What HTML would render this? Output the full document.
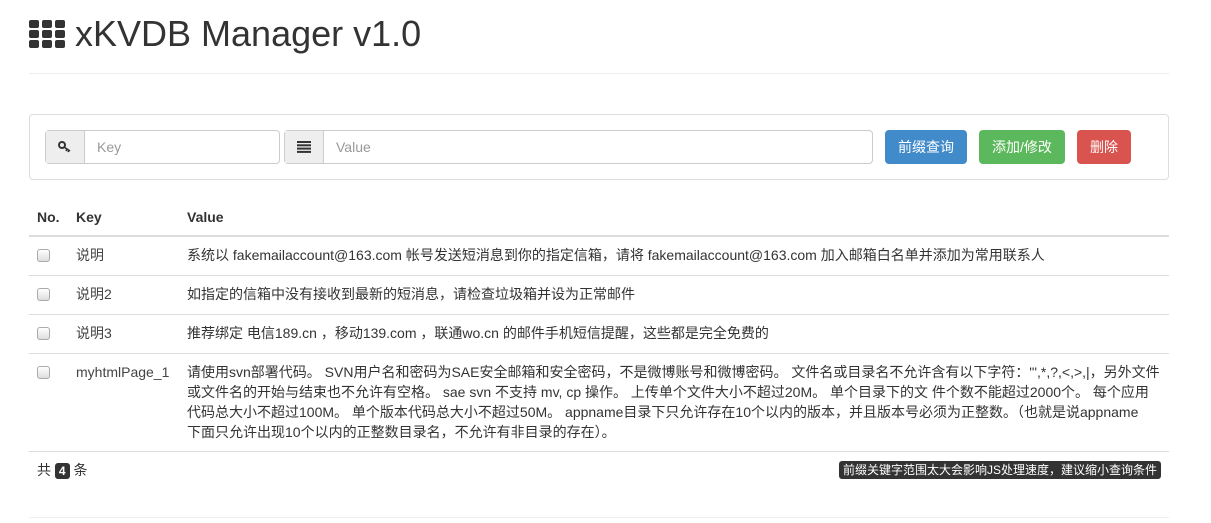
<!DOCTYPE html><html><head><meta charset="utf-8"><style>
body{margin:0;font-family:"Liberation Sans","Noto Sans CJK SC",sans-serif;font-size:14px;color:#333;background:#fff}
h1{position:absolute;left:29px;top:12px;margin:0;font-size:36px;font-weight:normal;line-height:44px;color:#333}
.hr{position:absolute;left:29px;width:1140px;border-top:1px solid #eee}
.box{position:absolute;left:29px;top:114px;width:1138px;height:64px;border:1px solid #ddd;border-radius:4px}
.ig{position:absolute;top:130px;height:32px;border:1px solid #ccc;border-radius:4px;display:flex;background:#fff}
.ad{width:38px;background:#eee;border-right:1px solid #ccc;display:flex;align-items:center;justify-content:center}
.ph{color:#999;padding-left:12px;line-height:32px}
.btn{position:absolute;top:130px;height:34px;line-height:34px;color:#fff;border-radius:4px;text-align:center;font-size:14px}
table{position:absolute;left:29px;top:199px;width:1140px;border-collapse:collapse}
th{text-align:left;font-weight:bold;padding:8px;line-height:20px;height:20px;border-bottom:2px solid #ddd}
td{padding:8px;line-height:20px;border-top:1px solid #ddd;vertical-align:top}
.t{height:22px;overflow:hidden}
.cb{display:inline-block;width:11px;height:11px;border:1px solid #aaa;border-radius:3px;background:linear-gradient(#fff,#ddd);margin-top:4px}
.k{color:#444}
.l{white-space:nowrap;height:20px}
</style></head><body>
<h1><svg width="36" height="28" viewBox="0 0 36 28" style="vertical-align:-2px;margin-right:10px"><g fill="#333"><rect x="0" y="0" width="10" height="8" rx="2"/><rect x="13" y="0" width="10" height="8" rx="2"/><rect x="26" y="0" width="10" height="8" rx="2"/><rect x="0" y="10" width="10" height="8" rx="2"/><rect x="13" y="10" width="10" height="8" rx="2"/><rect x="26" y="10" width="10" height="8" rx="2"/><rect x="0" y="20" width="10" height="8" rx="2"/><rect x="13" y="20" width="10" height="8" rx="2"/><rect x="26" y="20" width="10" height="8" rx="2"/></g></svg>xKVDB Manager v1.0</h1>
<div class="hr" style="top:73px"></div>
<div class="box"></div>
<div class="ig" style="left:45px;width:233px"><div class="ad"><svg width="14" height="12" viewBox="0 0 14 12"><circle cx="4" cy="4" r="3" fill="none" stroke="#333" stroke-width="2"/><path d="M6 6l6 4M9 8l-1 2M11 9l-1 2" stroke="#333" stroke-width="1.6"/></svg></div><div class="ph">Key</div></div>
<div class="ig" style="left:284px;width:587px"><div class="ad"><svg width="14" height="12" viewBox="0 0 14 12"><g fill="#333"><rect y="0" width="14" height="2"/><rect y="3.3" width="14" height="2"/><rect y="6.6" width="14" height="2"/><rect y="9.9" width="14" height="2"/></g></svg></div><div class="ph">Value</div></div>
<div class="btn" style="left:885px;width:82px;background:#428bca">前缀查询</div>
<div class="btn" style="left:979px;width:86px;background:#5cb85c">添加/修改</div>
<div class="btn" style="left:1077px;width:54px;background:#d9534f">删除</div>
<table>
<tr><th style="width:23px">No.</th><th style="width:95px">Key</th><th>Value</th></tr>
<tr><td><span class="cb"></span></td><td class="k"><div class="t">说明</div></td><td><div class="t">系统以 fakemailaccount@163.com 帐号发送短消息到你的指定信箱，请将 fakemailaccount@163.com 加入邮箱白名单并添加为常用联系人</div></td></tr>
<tr><td><span class="cb"></span></td><td class="k"><div class="t">说明2</div></td><td><div class="t">如指定的信箱中没有接收到最新的短消息，请检查垃圾箱并设为正常邮件</div></td></tr>
<tr><td><span class="cb"></span></td><td class="k"><div class="t">说明3</div></td><td><div class="t">推荐绑定 电信189.cn ，移动139.com ，联通wo.cn 的邮件手机短信提醒，这些都是完全免费的</div></td></tr>
<tr><td style="border-bottom:1px solid #ddd"><span class="cb"></span></td><td class="k" style="border-bottom:1px solid #ddd">myhtmlPage_1</td><td style="border-bottom:1px solid #ddd;padding-bottom:9px"><div class="l">请使用svn部署代码。 SVN用户名和密码为SAE安全邮箱和安全密码，不是微博账号和微博密码。 文件名或目录名不允许含有以下字符："',*,?,&lt;,&gt;,|，另外文件</div><div class="l">或文件名的开始与结束也不允许有空格。 sae svn 不支持 mv, cp 操作。 上传单个文件大小不超过20M。 单个目录下的文 件个数不能超过2000个。 每个应用</div><div class="l">代码总大小不超过100M。 单个版本代码总大小不超过50M。 appname目录下只允许存在10个以内的版本，并且版本号必须为正整数。（也就是说appname</div><div class="l">下面只允许出现10个以内的正整数目录名，不允许有非目录的存在）。</div></td></tr>
</table>
<div style="position:absolute;left:37px;top:460px;line-height:20px">共 <span style="background:#333;color:#fff;font-weight:bold;font-size:12px;padding:1px 4px;border-radius:3px">4</span> 条</div>
<div style="position:absolute;right:50px;top:461px;background:#333;color:#fff;font-size:12px;padding:0 4px;border-radius:3px;line-height:18px">前缀关键字范围太大会影响JS处理速度，建议缩小查询条件</div>
<div class="hr" style="top:517px"></div>
</body></html>
